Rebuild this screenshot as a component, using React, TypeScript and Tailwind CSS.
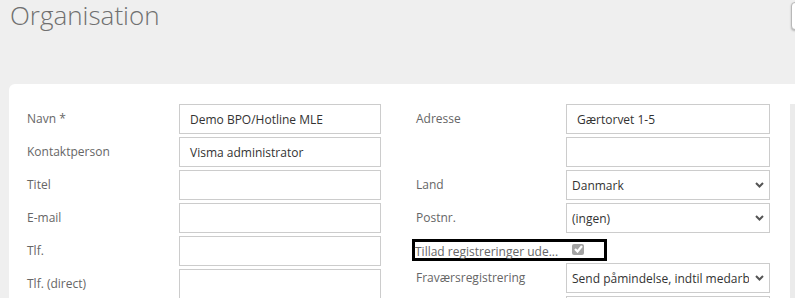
import type { ReactNode } from "react";

type Field = { label: string; value?: string };

const leftFields: Field[] = [
  { label: "Navn *", value: "Demo BPO/Hotline MLE" },
  { label: "Kontaktperson", value: "Visma administrator" },
  { label: "Titel" },
  { label: "E-mail" },
  { label: "Tlf." },
  { label: "Tlf. (direct)" },
];

function Chevron() {
  return (
    <svg width="9" height="6" viewBox="0 0 9 6" className="shrink-0">
      <polyline points="1,1 4.5,4.5 8,1" fill="none" stroke="#555" strokeWidth="2" />
    </svg>
  );
}

function TextBox({ value, width }: { value?: string; width: string }) {
  return (
    <div
      className={`${width} flex h-[30px] shrink-0 items-center border border-[#cccccc] bg-white px-[10px] pt-[2px] text-[12px] text-[#333]`}
    >
      {value}
    </div>
  );
}

function SelectBox({ value }: { value: string }) {
  return (
    <div className="flex h-[30px] w-[204px] shrink-0 items-center border border-[#cccccc] bg-white pl-[5px] pr-[5px] text-[12px] text-[#333]">
      <span className="mr-[6px] flex-1 overflow-hidden whitespace-nowrap pt-[2px]">{value}</span>
      <Chevron />
    </div>
  );
}

function Row({ label, labelWidth, children }: { label: string; labelWidth: string; children: ReactNode }) {
  return (
    <div className="flex h-[30px] items-center">
      <span className={`${labelWidth} shrink-0 text-[12px] text-[#666]`}>{label}</span>
      {children}
    </div>
  );
}

export default function App() {
  return (
    <div className="h-[298px] w-[795px] overflow-hidden bg-[#efefef] font-['Open_Sans',sans-serif]">
      <div className="flex h-[31px] items-start pl-[10px]">
        <h1 className="text-[26px] font-light leading-[31px] text-[#707070]">Organisation</h1>
        <div className="ml-auto mr-[-36px] mt-[2px] h-[28px] w-[40px] shrink-0 rounded-[4px] border border-[#b8b8b8] bg-white shadow-[0_1px_2px_rgba(0,0,0,0.25)]" />
      </div>

      <div className="ml-[9px] mt-[53px] flex h-[214px] rounded-tl-[6px] bg-white pl-[18px] pt-[20px]">
        {/* left column */}
        <div className="flex w-[354px] shrink-0 flex-col gap-[3px]">
          {leftFields.map((f) => (
            <Row key={f.label} label={f.label} labelWidth="w-[152px]">
              <TextBox value={f.value} width="w-[202px]" />
            </Row>
          ))}
        </div>

        {/* right column */}
        <div className="ml-[35px] flex w-[354px] shrink-0 flex-col gap-[3px]">
          <Row label="Adresse" labelWidth="w-[150px]">
            <TextBox value="Gærtorvet 1-5" width="w-[204px]" />
          </Row>
          <Row label="" labelWidth="w-[150px]">
            <TextBox width="w-[204px]" />
          </Row>
          <Row label="Land" labelWidth="w-[150px]">
            <SelectBox value="Danmark" />
          </Row>
          <Row label="Postnr." labelWidth="w-[150px]">
            <SelectBox value="(ingen)" />
          </Row>
          <div className="h-[24px]">
            <div className="ml-[-4px] mt-[3px] flex h-[22px] w-[195px] items-center border-[3px] border-black">
              <span className="w-[157px] shrink-0 whitespace-nowrap pt-[3px] text-[12px] text-[#666]">
                Tillad registreringer ude...
              </span>
              <span className="mt-[-2px] flex h-[11px] w-[12px] items-center justify-center rounded-[2px] bg-[#a3a3a3]">
                <svg width="9" height="8" viewBox="0 0 9 8">
                  <polyline points="1,4 3.5,6.5 8,1" fill="none" stroke="#fff" strokeWidth="2.2" />
                </svg>
              </span>
            </div>
          </div>
          <Row label="Fraværsregistrering" labelWidth="w-[150px]">
            <SelectBox value="Send påmindelse, indtil medarbejderen har registreret" />
          </Row>
          <Row label="" labelWidth="w-[150px]">
            <TextBox width="w-[204px]" />
          </Row>
        </div>

        <div className="ml-[20px] w-[40px] shrink-0 self-stretch bg-[#ebebeb]" />
      </div>
    </div>
  );
}
